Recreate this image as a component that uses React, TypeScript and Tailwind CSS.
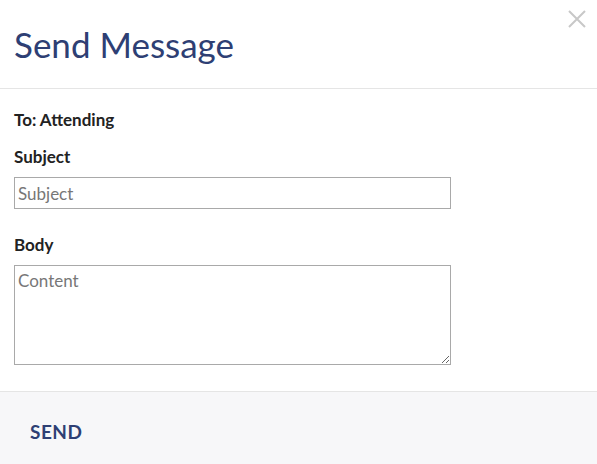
export default function App() {
  return (
    <div className="h-[464px] w-[597px] bg-white font-['Lato',sans-serif] text-[#333]">
      <div className="relative h-[89px] border-b border-[#e5e5e5] px-[14px] pt-[21px]">
        <h2 className="text-[35px] leading-[46px] text-[#2e3f74]">Send Message</h2>
        <button className="absolute right-[11px] top-[10px] text-[#c8c8c8]" aria-label="Close">
          <svg width="18" height="18" viewBox="0 0 18 18" fill="none" stroke="currentColor" strokeWidth="2">
            <path d="M1 1L17 17M17 1L1 17" />
          </svg>
        </button>
      </div>
      <div className="flex h-[302px] flex-col px-[14px] pt-[20px]">
        <p className="text-[17px] font-bold leading-[22px] text-[#222]">To: Attending</p>
        <label className="mt-[15px] text-[17px] font-bold leading-[22px] text-[#222]">Subject</label>
        <input
          placeholder="Subject"
          className="mt-[9px] h-[32px] w-[437px] border border-[#a9a9a9] px-[3px] text-[17px] outline-none placeholder:text-[#777]"
        />
        <label className="mt-[25px] text-[17px] font-bold leading-[22px] text-[#222]">Body</label>
        <textarea
          placeholder="Content"
          className="mt-[9px] h-[100px] w-[437px] border border-[#a9a9a9] px-[3px] py-[2px] text-[17px] outline-none placeholder:text-[#777]"
        />
      </div>
      <div className="flex h-[73px] items-center border-t border-[#e5e5e5] bg-[#f7f7f9] px-[30px] pt-[9px]">
        <button className="text-[19px] font-bold tracking-[0.5px] text-[#2e3f74]">SEND</button>
      </div>
    </div>
  )
}
